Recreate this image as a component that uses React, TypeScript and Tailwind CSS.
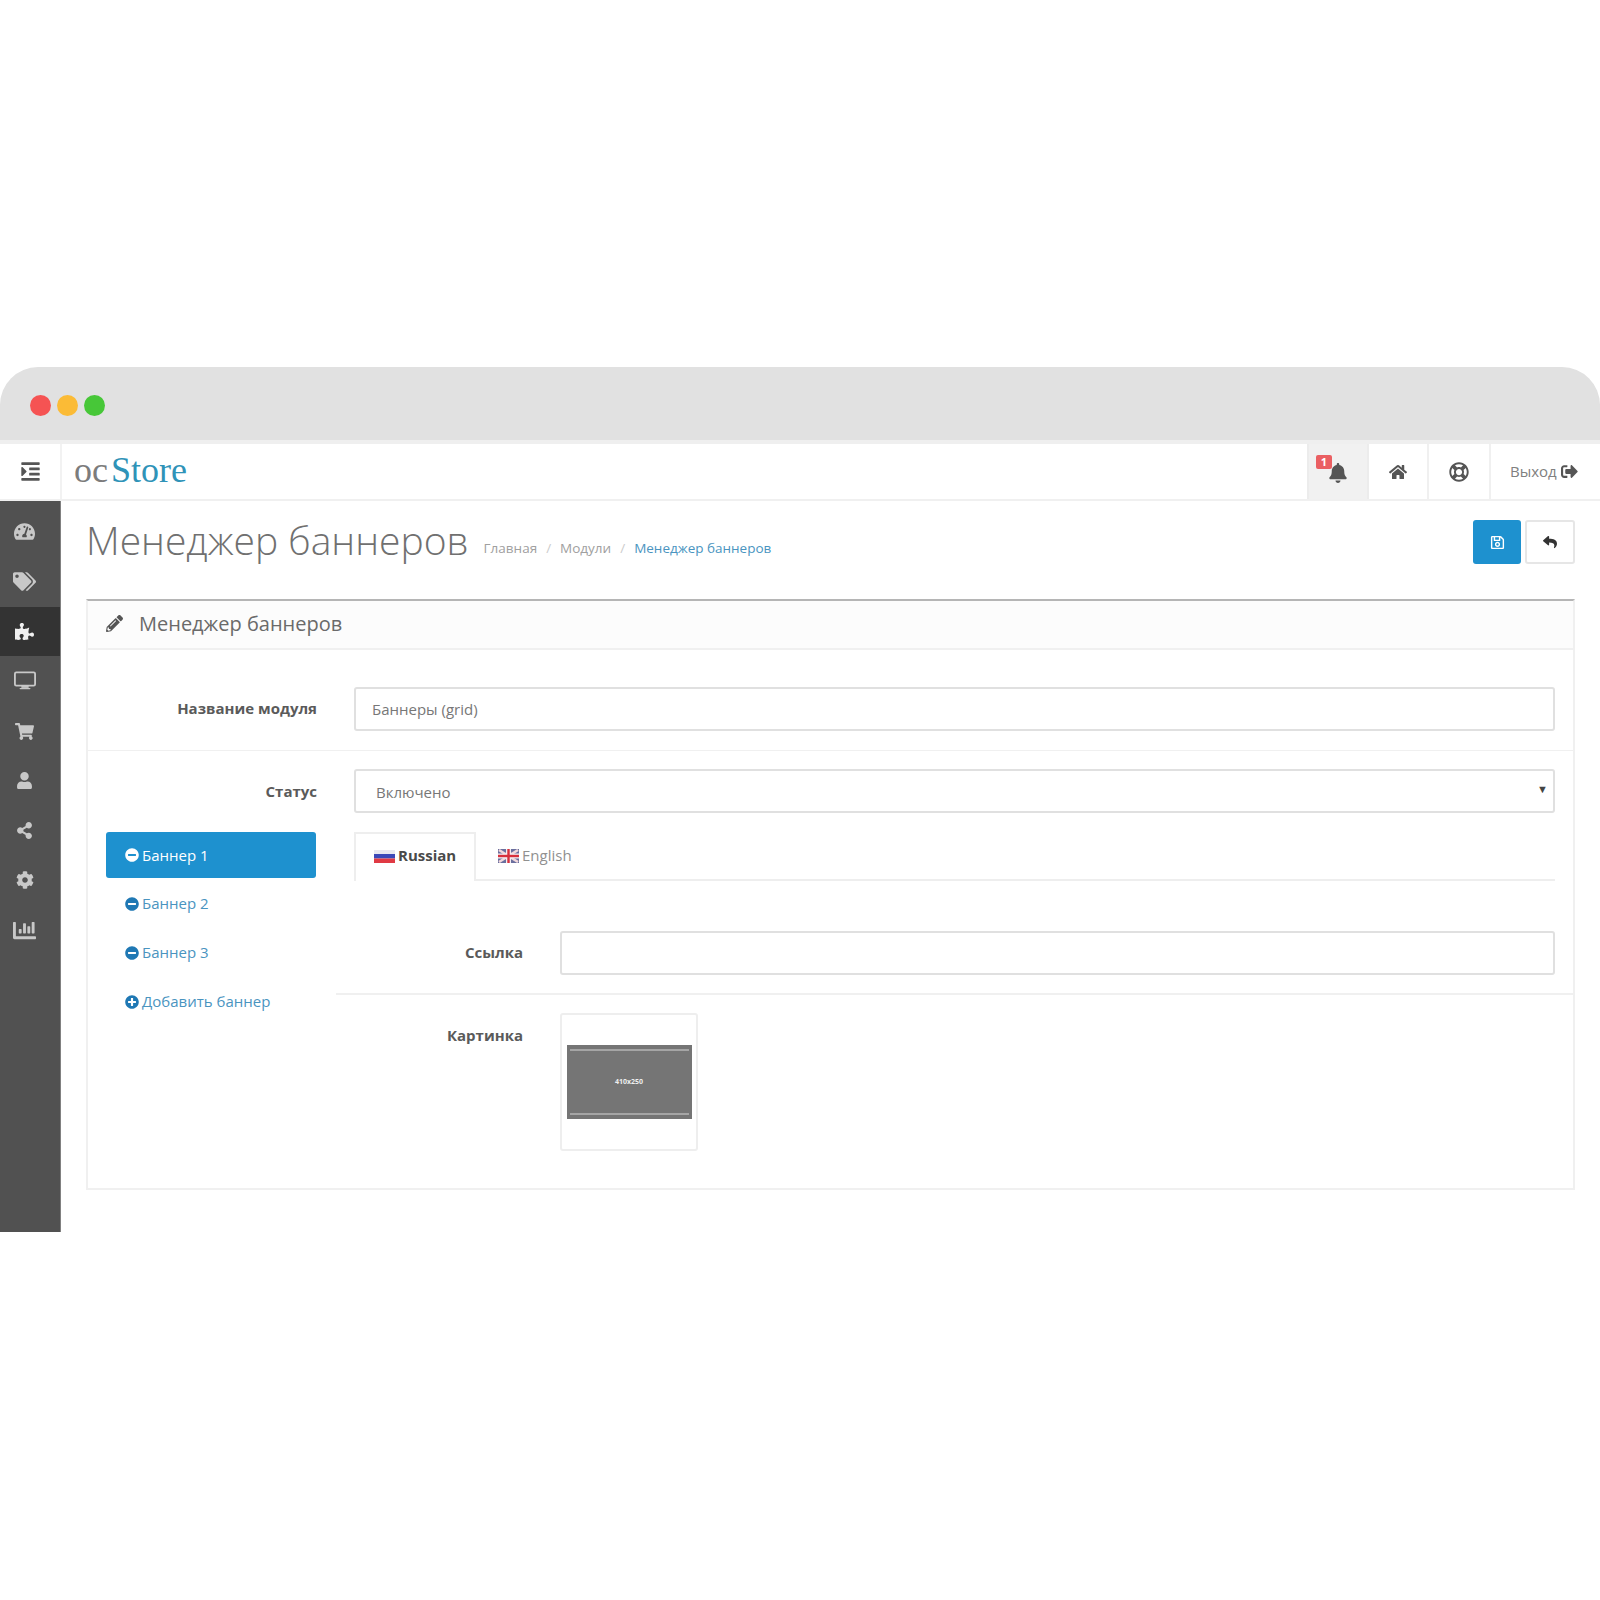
import React from "react";
import {
  FaTachometerAlt, FaTags, FaPuzzlePiece, FaShoppingCart, FaUser, FaShareAlt, FaCog, FaChartBar,
  FaIndent, FaBell, FaHome, FaRegLifeRing, FaSignOutAlt, FaRegSave, FaReply, FaPencilAlt, FaMinusCircle, FaPlusCircle,
} from "react-icons/fa";

const Desktop = () => (
  <svg width="22" height="20" viewBox="0 0 24 21" fill="none">
    <rect x="1" y="1" width="22" height="14.5" rx="1.5" stroke="#c8c8c8" strokeWidth="2" />
    <rect x="8" y="16" width="8" height="2" fill="#c8c8c8" />
    <rect x="6" y="18" width="12" height="1.6" rx="0.8" fill="#c8c8c8" />
  </svg>
);

const side = [
  { i: <FaTachometerAlt size={21} /> },
  { i: <FaTags size={23} /> },
  { i: <FaPuzzlePiece size={19} />, active: true },
  { i: <Desktop /> },
  { i: <FaShoppingCart size={19} /> },
  { i: <FaUser size={17} /> },
  { i: <FaShareAlt size={17} /> },
  { i: <FaCog size={18} /> },
  { i: <FaChartBar size={23} /> },
];

const RuFlag = () => (
  <svg width="21" height="14" viewBox="0 0 21 14" className="shrink-0">
    <rect width="21" height="4" y="1" fill="#e8e8f0" />
    <rect width="21" height="4.5" y="5" fill="#3a48b8" />
    <rect width="21" height="4.5" y="9.5" fill="#e03a44" />
  </svg>
);

const EnFlag = () => (
  <svg width="21" height="14" viewBox="0 0 21 14" className="shrink-0">
    <rect width="21" height="14" fill="#6a6f9e" />
    <path d="M1 1l19 12M20 1L1 13" stroke="#f2d8dc" strokeWidth="2.5" />
    <rect x="8" width="5" height="14" fill="#f4eef0" />
    <rect y="4.5" width="21" height="5" fill="#f4eef0" />
    <rect x="9.3" width="2.4" height="14" fill="#d8303c" />
    <rect y="5.8" width="21" height="2.4" fill="#d8303c" />
  </svg>
);

const inputCls =
  "block w-full h-[44px] border-2 border-[#e0e0e0] rounded-[3px] bg-white text-[15px] text-[#777] outline-none";

const Label = ({ children, className = "" }: { children: React.ReactNode; className?: string }) => (
  <label className={"block text-right font-bold text-[15px] text-[#5a5a5a] " + className}>{children}</label>
);

const BannerLink = ({ text, plus }: { text: string; plus?: boolean }) => (
  <a className="flex items-center gap-[3px] h-[49px] pl-[19px] text-[15px] text-[#4a94bf]">
    {plus ? <FaPlusCircle size={14} className="text-[#1f78b4]" /> : <FaMinusCircle size={14} className="text-[#1f78b4]" />}
    {text}
  </a>
);

export default function App() {
  return (
    <div className="min-h-[1600px] bg-white pt-[367px]" style={{ fontFamily: '"Open Sans", sans-serif' }}>
      {/* window bar */}
      <div className="h-[77px] rounded-t-[38px] bg-[#e1e1e1] border-b-4 border-[#efefef] flex items-start gap-[6px] pl-[30px] pt-[28px]">
        <span className="w-[21px] h-[21px] rounded-full bg-[#f55353]" />
        <span className="w-[21px] h-[21px] rounded-full bg-[#fbbb36]" />
        <span className="w-[21px] h-[21px] rounded-full bg-[#47c738]" />
      </div>

      {/* header */}
      <header className="h-[57px] flex items-stretch border-b-2 border-[#f0f0f0] bg-white">
        <div className="w-[62px] shrink-0 border-r-2 border-[#f2f2f2] flex items-center justify-center text-[#555]">
          <FaIndent size={21} />
        </div>
        <div className="flex-1 flex items-center pl-[12px] text-[36px] leading-none pb-[4px]" style={{ fontFamily: '"Liberation Serif", serif' }}>
          <span className="text-[#7c7c7c] mr-[3px]">oc</span>
          <span className="text-[#2f93b8]">Store</span>
        </div>
        <div className="w-[62px] relative bg-[#f1f1f1] border-x-2 border-[#ececec] flex items-center justify-center">
          <FaBell size={20} className="text-[#555] mt-[3px]" />
          <span className="absolute left-[7px] top-[11px] w-[16px] h-[14px] rounded-[2px] bg-[#ea5f62] text-white text-[11px] font-bold leading-[14px] text-center">1</span>
        </div>
        <div className="w-[60px] border-r-2 border-[#f0f0f0] flex items-center justify-center text-[#555]">
          <FaHome size={18} />
        </div>
        <div className="w-[62px] border-r-2 border-[#f0f0f0] flex items-center justify-center text-[#555]">
          <FaRegLifeRing size={20} />
        </div>
        <div className="w-[109px] flex items-center pl-[19px] gap-[4px] text-[15px] text-[#808080]">
          Выход <FaSignOutAlt size={17} className="text-[#555]" />
        </div>
      </header>

      <div className="flex items-stretch">
        {/* sidebar */}
        <aside className="w-[61px] shrink-0 h-[731px] bg-[#515151] border-r border-[#808080] pt-[6px]">
          {side.map((s, n) => (
            <div
              key={n}
              className={
                "h-[49.8px] w-full flex items-center justify-center pr-[11px] text-[#c8c8c8] " +
                (s.active ? "bg-[#333333] text-[#f0f0f0]" : "")
              }
            >
              {s.i}
            </div>
          ))}
        </aside>

        {/* main */}
        <main className="flex-1 min-w-0 pl-[25px] pr-[25px]">
          <div className="h-[98px] flex items-start">
            <h1 className="text-[39px] leading-[52px] text-[#707070] font-light mt-[13px]">Менеджер баннеров</h1>
            <div className="flex items-center text-[13.5px] text-[#a0a0a0] mt-[37px] ml-[15px]">
              <span>Главная</span>
              <span className="mx-[9px] text-[#ccc]">/</span>
              <span>Модули</span>
              <span className="mx-[9px] text-[#ccc]">/</span>
              <span className="text-[#4a94bf]">Менеджер баннеров</span>
            </div>
            <div className="ml-auto flex gap-[4px] mt-[19px]">
              <button className="w-[48px] h-[44px] rounded-[3px] bg-[#1e91cf] text-white flex items-center justify-center">
                <FaRegSave size={15} />
              </button>
              <button className="w-[50px] h-[44px] rounded-[3px] bg-white border-2 border-[#e6e6e6] text-[#333] flex items-center justify-center">
                <FaReply size={14} />
              </button>
            </div>
          </div>

          <section className="border-2 border-[#f0f0f0] border-t-[#b5b5b5]">
            <div className="h-[49px] bg-[#fcfcfc] border-b-2 border-[#f0f0f0] flex items-center pl-[18px] gap-[16px] text-[20px] text-[#6a6a6a] pb-[2px]">
              <FaPencilAlt size={17} className="text-[#555]" />
              Менеджер баннеров
            </div>

            <div className="pl-[18px] pr-[18px] pt-[37px] pb-[19px] border-b border-[#f0f0f0] flex items-center">
              <Label className="w-[211px] shrink-0 mb-[2px]">Название модуля</Label>
              <input readOnly value="Баннеры (grid)" className={inputCls + " ml-[37px] px-[16px]"} />
            </div>

            <div className="pl-[18px] pr-[18px] pt-[18px] flex items-center">
              <Label className="w-[211px] shrink-0">Статус</Label>
              <div className="relative flex-1 ml-[37px]">
                <select className={inputCls + " appearance-none px-[20px] pt-[2px]"}>
                  <option>Включено</option>
                </select>
                <span className="absolute right-[7px] top-[12px] text-[11px] text-[#444]">▼</span>
              </div>
            </div>

            <div className="flex pt-[19px] pb-[37px]">
              <nav className="w-[210px] ml-[18px] shrink-0">
                <a className="flex items-center gap-[3px] h-[46px] mb-[1px] pl-[19px] rounded-[3px] bg-[#1e91cf] text-white text-[15px]">
                  <FaMinusCircle size={14} />
                  Баннер 1
                </a>
                <BannerLink text="Баннер 2" />
                <BannerLink text="Баннер 3" />
                <BannerLink text="Добавить баннер" plus />
              </nav>

              <div className="flex-1 min-w-0 ml-[20px]">
                <div className="ml-[18px] mr-[18px] flex h-[49px] border-b-2 border-[#eeeeee]">
                  <div className="h-[49px] w-[122px] border-2 border-b-0 border-[#eeeeee] bg-white flex items-center pl-[18px] gap-[3px] font-bold text-[15px] text-[#4a4a4a] pb-[4px]">
                    <RuFlag /> Russian
                  </div>
                  <div className="flex items-center pl-[22px] gap-[3px] text-[15px] text-[#909090]">
                    <EnFlag /> English
                  </div>
                </div>

                <div className="flex items-center pt-[50px] pb-[18px] pr-[18px] border-b-2 border-[#f0f0f0]">
                  <Label className="w-[187px] shrink-0 mb-[1px]">Ссылка</Label>
                  <input readOnly className={inputCls + " ml-[37px]"} />
                </div>

                <div className="flex items-start pt-[18px]">
                  <Label className="w-[187px] shrink-0 mt-[11px]">Картинка</Label>
                  <div className="ml-[37px] w-[138px] h-[138px] border-2 border-[#eeeeee] rounded-[3px] flex items-center justify-center">
                    <div className="w-[125px] h-[74px] mb-[1px] bg-[#757575] border-y-[4px] border-[#757575] flex flex-col justify-between">
                      <div className="h-[2px] mx-[3px] bg-[#a5a5a5]" />
                      <div className="text-center text-[7px] font-bold text-[#eee] leading-none">410x250</div>
                      <div className="h-[2px] mx-[3px] bg-[#a5a5a5]" />
                    </div>
                  </div>
                </div>
              </div>
            </div>
          </section>
        </main>
      </div>
    </div>
  );
}
